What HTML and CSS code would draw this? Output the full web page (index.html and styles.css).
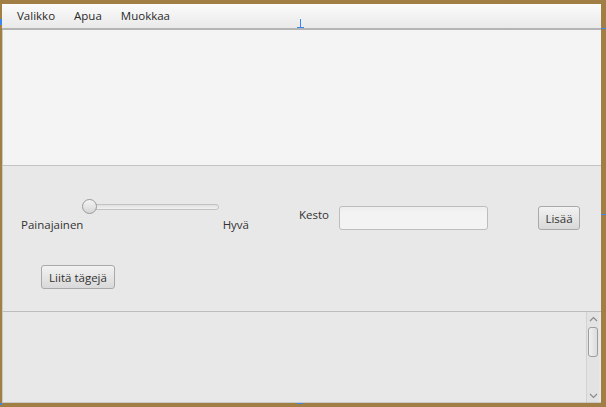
FILE: index.html
```html
<!DOCTYPE html>
<html lang="fi">
<head>
<meta charset="utf-8">
<link rel="stylesheet" href="styles.css">
</head>
<body>
<div class="window">
  <div class="menubar">
    <span class="menu">Valikko</span>
    <span class="menu">Apua</span>
    <span class="menu">Muokkaa</span>
  </div>
  <div class="top-pane"></div>
  <div class="mid-pane">
    <div class="row1">
      <div class="sliderbox">
        <div class="slider"><div class="track"></div><div class="thumb"></div></div>
        <div class="labels"><span>Painajainen</span><span>Hyvä</span></div>
      </div>
      <span class="kesto">Kesto</span>
      <div class="input"></div>
      <button class="btn lisaa">Lisää</button>
    </div>
    <button class="btn liita">Liitä tägejä</button>
  </div>
  <div class="bottom-pane">
    <div class="content"></div>
    <div class="scrollbar">
      <svg class="arrow" width="9" height="6" viewBox="0 0 9 6"><path d="M1 5 L4.5 1.5 L8 5" fill="none" stroke="#8a8a8a" stroke-width="1.2"/></svg>
      <div class="sthumb"></div>
      <div class="spacer"></div>
      <svg class="arrow" width="9" height="6" viewBox="0 0 9 6"><path d="M1 1 L4.5 4.5 L8 1" fill="none" stroke="#8a8a8a" stroke-width="1.2"/></svg>
    </div>
  </div>
  <div class="mark m-top"></div>
</div>
<div class="mark m-left"></div>
<div class="mark m-right1"></div>
<div class="mark m-right2"></div>
<div class="mark m-bl"></div>
<div class="mark m-bm"></div>
</body>
</html>
```
FILE: styles.css
```css
html, body {
  margin: 0;
  padding: 0;
}
body {
  background: #a07e44;
  width: 606px;
  height: 407px;
  position: relative;
  overflow: hidden;
  font-family: "Open Sans", "Noto Sans", sans-serif;
  font-size: 11.5px;
  color: #333;
}
.window {
  position: relative;
  margin: 4px 0 0 2px;
  width: 599px;
  height: 399px;
  display: flex;
  flex-direction: column;
  background: #e8e8e8;
}
.menubar {
  height: 24px;
  display: flex;
  align-items: center;
  gap: 19px;
  padding-left: 15px;
  background: linear-gradient(#fbfbfb, #e9e9e9);
  border-bottom: 2px solid #b4b4b4;
  flex: none;
}
.menu {
  line-height: 24px;
  color: #2a2a2a;
}
.top-pane {
  height: 135px;
  background: #f4f4f4;
  border-left: 1px solid #c9c9c9;
  border-bottom: 1px solid #c4c4c4;
  flex: none;
}
.mid-pane {
  height: 146px;
  flex: none;
  border-left: 1px solid #c9c9c9;
  border-bottom: 1px solid #bdbdbd;
  background: #e8e8e8;
  box-sizing: border-box;
  padding-top: 33px;
}
.row1 {
  display: flex;
  align-items: flex-start;
}
.sliderbox {
  margin-left: 18px;
  width: 228px;
}
.slider {
  position: relative;
  margin-left: 61px;
  width: 137px;
  height: 15px;
}
.track {
  position: absolute;
  left: 4px;
  right: 0;
  top: 5px;
  height: 4px;
  border: 1px solid #c2c2c2;
  border-radius: 3px;
  background: linear-gradient(#e0e0e0, #f2f2f2);
}
.thumb {
  position: absolute;
  left: 0;
  top: 0;
  width: 13px;
  height: 13px;
  border-radius: 50%;
  border: 1px solid #9a9a9a;
  background: linear-gradient(#f4f4f4, #d6d6d6);
}
.labels {
  display: flex;
  justify-content: space-between;
  margin-top: 2px;
  line-height: 18px;
}
.kesto {
  margin-left: 50px;
  width: 40px;
  line-height: 18px;
  margin-top: 7px;
}
.input {
  width: 147px;
  height: 22px;
  margin-top: 7px;
  border: 1px solid #bdbdbd;
  border-radius: 3px;
  background: linear-gradient(#eeeeee, #f3f3f3 30%);
}
.btn {
  font-family: inherit;
  font-size: 11.5px;
  color: #333;
  padding: 0;
  height: 24px;
  border: 1px solid #a9a9a9;
  border-radius: 3px;
  background: linear-gradient(#f2f2f2, #d9d9d9);
}
.lisaa {
  width: 42px;
  margin-left: 50px;
  margin-top: 7px;
}
.liita {
  display: block;
  width: 74px;
  margin-left: 38px;
  margin-top: 31px;
}
.bottom-pane {
  flex: 1;
  display: flex;
  border-left: 1px solid #c9c9c9;
  border-bottom: 1px solid #c9c9c9;
}
.content {
  flex: 1;
}
.scrollbar {
  width: 13px;
  margin-right: 2px;
  background: #e3e3e3;
  border-left: 1px solid #d2d2d2;
  display: flex;
  flex-direction: column;
  align-items: center;
  padding: 4px 0 3px;
  box-sizing: border-box;
}
.arrow {
  flex: none;
}
.sthumb {
  margin-top: 5px;
  width: 8px;
  height: 28px;
  border: 1px solid #9d9d9d;
  border-radius: 3px;
  background: linear-gradient(90deg, #f0f0f0, #dcdcdc);
}
.spacer {
  flex: 1;
}
.mark {
  position: absolute;
  background: #3a86f0;
}
.m-top {
  left: 298px;
  top: 15px;
  width: 1px;
  height: 9px;
}
.m-top::after {
  content: "";
  position: absolute;
  left: -3px;
  bottom: 0;
  width: 7px;
  height: 1px;
  background: #3a86f0;
}
.m-left {
  left: 0;
  top: 19px;
  width: 2px;
  height: 6px;
}
.m-right1 {
  left: 601px;
  top: 28px;
  width: 5px;
  height: 1px;
}
.m-right2 {
  left: 601px;
  top: 214px;
  width: 5px;
  height: 1px;
}
.m-bl {
  left: 0;
  top: 403px;
  width: 2px;
  height: 2px;
}
.m-bm {
  left: 297px;
  top: 403px;
  width: 6px;
  height: 1px;
}
```
